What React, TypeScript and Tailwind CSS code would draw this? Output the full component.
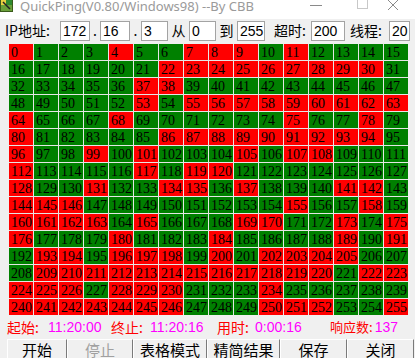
import React from "react";

const ROWS = [
  "RGGGRGGRRRGRGGGG",
  "GGGGGGRRRRRRRRRG",
  "GGGGGRRGGGGGGGGG",
  "GGGGGRGRRRRRRRRR",
  "RGGGRGGGGGGRGGRG",
  "RGGGGGRRRRRRRRRG",
  "RGGRGRGGGRGRRGGG",
  "RGGGGRGRRGGGGGGG",
  "RGGRGGRRGRGGGRRG",
  "RRRGGGGGGGGRGGRG",
  "RRRRGRGGGRRGGRGR",
  "RGGGRGGGRGGGGRGR",
  "GRRGRRRGRGRRRRGG",
  "GRRRRRRRRRRRRGRR",
  "RRRGRRRGGGRGGGGG",
  "RRRRRRRGGGRRRGGR",
];

const cjk = { fontFamily: '"Noto Sans CJK SC", sans-serif' };
const num = { fontFamily: '"Liberation Sans", "Noto Sans CJK SC", sans-serif' };

function Field({ value, w }: { value: string; w: string }) {
  return (
    <div
      className={`${w} h-[20px] bg-white border border-[#a3a3a3] pl-[2px] text-[14px] leading-[18px] text-black overflow-hidden whitespace-nowrap`}
      style={num}
    >
      {value}
    </div>
  );
}

function AppIcon() {
  return (
    <svg width="14" height="13" viewBox="0 0 14 13" className="shrink-0">
      <rect x="0" y="0" width="13" height="12" fill="#3a5a1a" />
      <rect x="1" y="0" width="5" height="5" fill="#e8d040" />
      <rect x="6" y="0" width="6" height="5" fill="#2f8a2f" />
      <rect x="1" y="5" width="11" height="6" fill="#6aa03a" />
      <path d="M3 2 L10 9" stroke="#222" strokeWidth="1.5" />
    </svg>
  );
}

export default function App() {
  return (
    <div className="w-[415px] h-[358px] bg-[#f0f0f0] overflow-hidden flex flex-col">
      {/* title bar */}
      <div className="h-[19px] bg-white flex items-start shrink-0">
        <AppIcon />
        <span
          className="ml-[6px] text-[13px] leading-[15px] -mt-[1px] text-[#9a9a9a] whitespace-nowrap"
          style={{ fontFamily: '"Noto Sans", sans-serif' }}
        >
          QuickPing(V0.80/Windows98) --By CBB
        </span>
        <div className="ml-auto flex text-[#9a9a9a]">
          <div className="w-[46px] flex justify-center pt-[5px]">
            <div className="w-[12px] h-px bg-[#8a8a8a]" />
          </div>
          <div className="w-[46px] flex justify-center pt-0">
            <div className="w-[11px] h-[10px] border border-[#c8c8c8] -mt-[1px]" />
          </div>
          <div className="w-[30px] flex justify-start pl-[2px]">
            <svg width="12" height="12" viewBox="0 0 12 12">
              <path d="M1 0 L11 10 M11 0 L1 10" stroke="#8a8a8a" strokeWidth="1" fill="none" />
            </svg>
          </div>
        </div>
      </div>

      {/* ip row */}
      <div className="h-[23px] flex items-center pl-[5px] text-[14px] text-black shrink-0" style={cjk}>
        <span className="w-[55px] whitespace-nowrap">IP地址:</span>
        <Field value="172" w="w-[30px]" />
        <span className="w-[10px] text-center">.</span>
        <Field value="16" w="w-[30px]" />
        <span className="w-[11px] text-center">.</span>
        <Field value="3" w="w-[27px]" />
        <span className="w-[21px] text-center">从</span>
        <Field value="0" w="w-[27px]" />
        <span className="w-[21px] text-center">到</span>
        <Field value="255" w="w-[28px]" />
        <span className="w-[46px] pl-[9px] whitespace-nowrap">超时:</span>
        <Field value="200" w="w-[34px]" />
        <span className="w-[44px] pl-[5px] whitespace-nowrap">线程:</span>
        <Field value="20" w="w-[21px]" />
      </div>

      {/* grid */}
      <div className="mt-[2px] ml-[9px] w-[399px] grid grid-cols-[repeat(16,24px)] gap-px bg-[#e6e6e6] shrink-0">
        {ROWS.flatMap((row, r) =>
          row.split("").map((c, i) => (
            <div
              key={r * 16 + i}
              className={`h-[16px] pl-[2px] overflow-hidden whitespace-nowrap text-[14px] leading-[18px] text-black ${
                c === "R" ? "bg-[#ff0000]" : "bg-[#008000]"
              }`}
              style={{ fontFamily: '"Liberation Serif", serif' }}
            >
              {r * 16 + i}
            </div>
          ))
        )}
      </div>

      {/* status */}
      <div className="h-[24px] flex items-center pl-[7px] text-[14px] whitespace-nowrap shrink-0">
        <span className="w-[41px] text-[#ff0000]" style={cjk}>起始:</span>
        <span className="w-[63px] text-[#ff00ff]" style={num}>11:20:00</span>
        <span className="w-[39px] text-[#ff0000]" style={cjk}>终止:</span>
        <span className="w-[67px] text-[#ff00ff]" style={num}>11:20:16</span>
        <span className="w-[38px] text-[#ff0000]" style={cjk}>用时:</span>
        <span className="w-[75px] text-[#ff00ff]" style={num}>0:00:16</span>
        <span className="pr-[2px] text-[13px] text-[#ff0000]" style={cjk}>响应数:</span>
        <span className="text-[#ff00ff]" style={num}>137</span>
      </div>

      {/* buttons */}
      <div className="flex pl-[7px] text-[15px] shrink-0" style={cjk}>
        {[
          { t: "开始", w: "w-[60px]" },
          { t: "停止", w: "w-[66px]", off: true },
          { t: "表格模式", w: "w-[74px]" },
          { t: "精简结果", w: "w-[73px]" },
          { t: "保存", w: "w-[67px]" },
          { t: "关闭", w: "w-[67px]" },
        ].map((b) => (
          <div
            key={b.t}
            className={`${b.w} h-[22px] border-l border-t border-white border-r border-r-[#7a7a7a] flex justify-center leading-[20px] ${
              b.off ? "text-[#a0a0a0]" : "text-black"
            }`}
          >
            {b.t}
          </div>
        ))}
      </div>
    </div>
  );
}
